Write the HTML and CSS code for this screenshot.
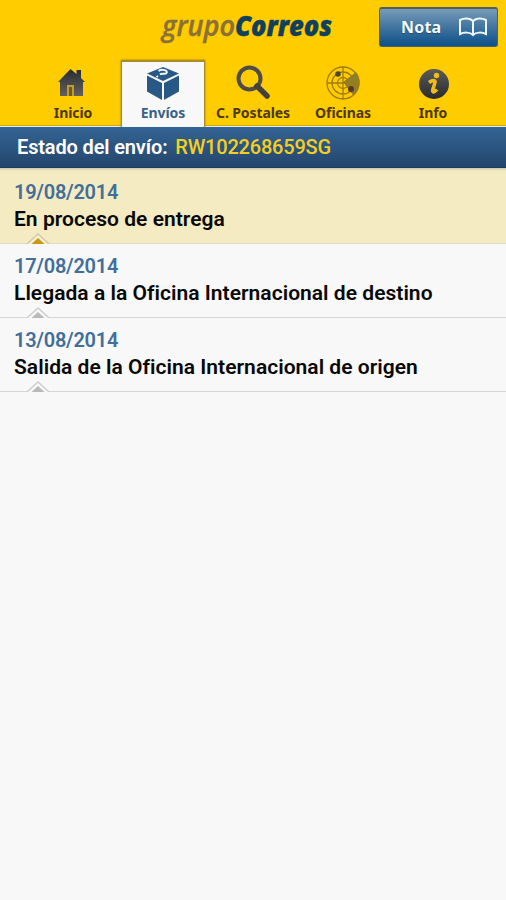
FILE: index.html
```html
<!DOCTYPE html>
<html lang="es">
<head>
<meta charset="utf-8">
<title>Correos - Envíos</title>
<link rel="stylesheet" href="styles.css">
</head>
<body>
<header class="header">
  <div class="topbar">
    <svg class="logo" width="176" height="36" viewBox="0 0 176 36" role="img" aria-label="grupoCorreos">
      <text class="logo-grupo" x="1" y="25.500" textLength="73" lengthAdjust="spacingAndGlyphs">grupo</text>
      <text class="logo-correos" x="74" y="25.500" textLength="97" lengthAdjust="spacingAndGlyphs">Correos</text>
    </svg>
    <button class="note" type="button">
      <span>Nota</span>
      <svg width="30" height="20" viewBox="0 0 30 20" fill="none" stroke="#eef6fb" stroke-width="2">
        <path d="M15 4C12 .8 6 .8 2 3V17C6 15 12 15 15 18C18 15 24 15 28 17V3C24 .8 18 .8 15 4V18"/>
      </svg>
    </button>
  </div>
  <nav class="tabs">
    <a class="tab">
      <svg width="36" height="36" viewBox="0 0 36 36">
        <defs><linearGradient id="dark" x1="0" y1="0" x2="0" y2="1"><stop offset="0" stop-color="#272c33"/><stop offset="1" stop-color="#65605a"/></linearGradient></defs>
        <path fill="url(#dark)" d="M15.500 4 21.500 9V5H26V13L30 17H28V31H5V17H3Z"/>
        <path fill="#c09d2c" d="M12 20H19V31H12Z"/><path fill="#6a5a30" d="M14 22H17V31H14Z"/>
      </svg>
      <span>Inicio</span>
    </a>
    <a class="tab active">
      <svg width="36" height="36" viewBox="0 0 36 36">
        <path fill="#285886" d="M18 1 34 7.500 18 15 2 7.500Z"/>
        <path fill="#285886" d="M2 9.500 17 17V34L2 25.500Z"/>
        <path fill="#285886" d="M34 9.500 19 17V34L34 25.500Z"/>
        <path fill="none" stroke="#f4f8fa" stroke-width="2" d="M13.500 5C17 2.500 23.500 4.500 21.500 7C20 9 17 6.500 15 8.500M13 10 11.500 11"/>
      </svg>
      <span>Envíos</span>
    </a>
    <a class="tab">
      <svg width="36" height="36" viewBox="0 0 36 36">
        <circle cx="14.500" cy="13.500" r="11" fill="none" stroke="#4e4b48" stroke-width="4"/>
        <path d="M22 21 32 31" stroke="#44403c" stroke-width="5.500" stroke-linecap="round"/>
      </svg>
      <span>C. Postales</span>
    </a>
    <a class="tab">
      <svg width="36" height="36" viewBox="0 0 36 36">
        <path fill="#8b8032" d="M18 17 31 7A16 16 0 0 1 28 30Z"/>
        <g fill="none" stroke="#a17c0d" stroke-width="1.300">
          <circle cx="18" cy="18" r="16"/><circle cx="18" cy="18" r="11"/><circle cx="18" cy="18" r="5.500"/>
          <path d="M2 18H34M18 2V34"/>
        </g>
        <circle cx="13" cy="9" r="2.800" fill="#4d482f"/><circle cx="26" cy="24" r="3" fill="#5c3823"/>
      </svg>
      <span>Oficinas</span>
    </a>
    <a class="tab">
      <svg width="36" height="36" viewBox="0 0 36 36">
        <defs><linearGradient id="info" x1="0" y1="0" x2="0" y2="1"><stop offset="0" stop-color="#5b5a59"/><stop offset="1" stop-color="#292b2e"/></linearGradient></defs>
        <circle cx="19" cy="19" r="15" fill="url(#info)"/>
        <circle cx="21.500" cy="10.500" r="2.700" fill="#efbd1b"/>
        <path d="M14 17.500C18 14.500 20.500 15 20 17.500L17.800 24.500C17 28 19.500 27.500 22 24.500" fill="none" stroke="#efbd1b" stroke-width="3.500"/>
      </svg>
      <span>Info</span>
    </a>
  </nav>
</header>
<main>
  <h1 class="status">Estado del envío: <strong>RW102268659SG</strong></h1>
  <ul class="events">
    <li class="event current">
      <time>19/08/2014</time><p>En proceso de entrega</p>
      <svg class="marker" width="22" height="11" viewBox="0 0 22 11"><path class="outline" d="M0 11 11 1 22 11"/><path class="fill" d="M4.500 11 11 5 17.500 11Z"/></svg>
    </li>
    <li class="event">
      <time>17/08/2014</time><p>Llegada a la Oficina Internacional de destino</p>
      <svg class="marker" width="22" height="11" viewBox="0 0 22 11"><path class="outline" d="M0 11 11 1 22 11"/><path class="fill" d="M4.500 11 11 5 17.500 11Z"/></svg>
    </li>
    <li class="event">
      <time>13/08/2014</time><p>Salida de la Oficina Internacional de origen</p>
      <svg class="marker" width="22" height="11" viewBox="0 0 22 11"><path class="outline" d="M0 11 11 1 22 11"/><path class="fill" d="M4.500 11 11 5 17.500 11Z"/></svg>
    </li>
  </ul>
</main>
</body>
</html>
```
FILE: styles.css
```css
* { box-sizing: border-box; }
body { margin: 0; min-height: 900px; background: #f8f8f8; font-family: Roboto, sans-serif; }
.header { height: 127px; background: #fc0; border-bottom: 1px solid #e9edf0; box-shadow: inset 0 -1px #d2aa08; }
.topbar { height: 60px; display: flex; justify-content: space-between; align-items: flex-start; padding: 7px 8px 0 161px; }
.logo { margin-top: 3px; overflow: visible; font-family: "Open Sans", sans-serif; font-size: 28px; font-style: italic; }
.logo-grupo { fill: #8b7038; stroke: #8b7038; stroke-width: .4; font-weight: 600; }
.logo-correos { fill: #11405c; stroke: #11405c; stroke-width: .4; font-weight: 800; }
.note { width: 119px; height: 40px; display: flex; align-items: center; justify-content: space-between; padding: 0 9px 2px 21px; border: 1px solid #42617a; border-top: 2px solid #515c5c; border-radius: 3px; background: linear-gradient(#779bb7, #41749f 50%, #0c5089); color: #f5faff; font: 700 16px "Noto Sans", sans-serif; letter-spacing: .2px; text-shadow: 0 1px 1px #244b6b; }
.tabs { display: flex; height: 66px; padding-left: 28px; }
.tab { width: 84px; margin: 0 3px; height: 66px; padding-top: 5px; display: flex; flex-direction: column; align-items: center; color: #4b390b; font: 700 14px/20px "Noto Sans", sans-serif; letter-spacing: -.1px; white-space: nowrap; }
.tab svg { flex: none; margin-bottom: 2px; }
.tab.active { height: 67px; color: #386387; background: #f8f8f8; border: 1px solid #aa8d24; border-width: 2px 1px 0; box-shadow: 0 0 2px #8b7520; clip-path: inset(-3px -3px 0); padding-top: 4px; }
.tab.active svg { margin-bottom: 1px; }
.status { margin: 0; height: 41px; padding-left: 17px; background: linear-gradient(#336494, #24466c); border-bottom: 1px solid #203d5f; color: #fff; font: 600 20px/40px Roboto, sans-serif; letter-spacing: -.14px; white-space: pre; }
.status strong { margin-left: 3px; color: #f5cf20; font-weight: 500; letter-spacing: -.2px; }
.events { margin: 0; padding: 0; list-style: none; }
.event { position: relative; height: 74px; padding: 8px 14px 0; border-bottom: 1px solid #d6d6d6; color: #080808; font-size: 21px; font-weight: 600; line-height: 28px; white-space: nowrap; }
.event.current { height: 76px; padding-top: 10px; background: linear-gradient(#cbc7b5, #f5ebc2 3px); border-color: #dedac6; }
.event time { display: block; color: #416f9a; font-size: 20px; line-height: 28px; letter-spacing: -.25px; }
.event p { margin: -1px 0 0; letter-spacing: .03px; font-variant-ligatures: common-ligatures; }
.marker { position: absolute; left: 27px; bottom: -1px; }
.outline { fill: #f8f8f8; stroke: #ccc; stroke-width: 1.3; }
.fill { fill: #b9b9b9; }
.current .outline { fill: #f7f0d2; stroke: #cfc6a5; }
.current .fill { fill: #c49a17; }
```
